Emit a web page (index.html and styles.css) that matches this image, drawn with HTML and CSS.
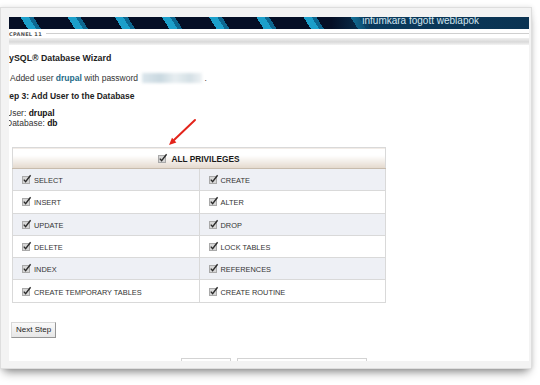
FILE: index.html
```html
<!DOCTYPE html>
<html lang="en">
<head>
  <meta charset="UTF-8">
  <title>MySQL Database Wizard</title>
  <link rel="stylesheet" href="styles.css">
</head>
<body>

  <svg class="defs" width="0" height="0">
    <symbol id="cb" viewBox="0 0 10 10">
      <rect x="0.5" y="2.5" width="7" height="7" fill="#d6d6d6" stroke="#a9a9a9"/>
      <path d="M1.8 5.6 L3.6 7.6 L8.6 1.2" fill="none" stroke="#2b2b2b" stroke-width="1.4"/>
    </symbol>
  </svg>

  <div class="frame">
    <div class="screen">
      <div class="banner"><span>infumkara fogott weblapok</span></div>
      <div class="cpbar"><span class="cplabel">CPANEL 11</span><span class="cpline"></span></div>
      <div class="cpband"></div>

      <div class="content">
        <h1 class="title">MySQL&reg; Database Wizard</h1>
        <p class="added">Added user <b class="user">drupal</b> with password <span class="blur"></span>.</p>
        <h2 class="step">Step 3: Add User to the Database</h2>
        <p class="info">User: <b>drupal</b><br>Database: <b>db</b></p>

        <table class="privs">
          <tr>
            <th colspan="2"><svg class="cb"><use href="#cb"/></svg>ALL PRIVILEGES</th>
          </tr>
          <tr class="alt">
            <td><svg class="cb"><use href="#cb"/></svg>SELECT</td>
            <td><svg class="cb"><use href="#cb"/></svg>CREATE</td>
          </tr>
          <tr>
            <td><svg class="cb"><use href="#cb"/></svg>INSERT</td>
            <td><svg class="cb"><use href="#cb"/></svg>ALTER</td>
          </tr>
          <tr class="alt">
            <td><svg class="cb"><use href="#cb"/></svg>UPDATE</td>
            <td><svg class="cb"><use href="#cb"/></svg>DROP</td>
          </tr>
          <tr>
            <td><svg class="cb"><use href="#cb"/></svg>DELETE</td>
            <td><svg class="cb"><use href="#cb"/></svg>LOCK TABLES</td>
          </tr>
          <tr class="alt">
            <td><svg class="cb"><use href="#cb"/></svg>INDEX</td>
            <td><svg class="cb"><use href="#cb"/></svg>REFERENCES</td>
          </tr>
          <tr>
            <td><svg class="cb"><use href="#cb"/></svg>CREATE TEMPORARY TABLES</td>
            <td><svg class="cb"><use href="#cb"/></svg>CREATE ROUTINE</td>
          </tr>
        </table>

        <button class="next">Next Step</button>

        <div class="bottom">
          <span class="box small"></span>
          <span class="box wide"></span>
        </div>
      </div>

      <!-- annotation arrow -->
      <svg class="arrow" width="32" height="30" viewBox="0 0 32 30">
        <line x1="28" y1="2" x2="7" y2="22" stroke="#e3241b" stroke-width="2" stroke-linecap="round"/>
        <polygon points="2,27 9.4,24.6 5,19.8" fill="#e3241b"/>
      </svg>
    </div>
  </div>

</body>
</html>
```

FILE: styles.css
```css
body {
  margin: 0;
  height: 385px;
  overflow: hidden;
  background: #fff;
  font-family: 'Liberation Sans', Arial, sans-serif;
  color: #222;
}

.defs {
  position: absolute;
}

.frame {
  margin-top: 7px;
  width: 520px;
  padding: 9px 2px 7px 8px;
  background: #f3f3f3;
  border: 1px solid #dedede;
  box-shadow: 0 7px 9px -4px rgba(0, 0, 0, 0.45), 0 0 5px rgba(0, 0, 0, 0.12);
}

.screen {
  position: relative;
  height: 344px;
  background: #fff;
  overflow: hidden;
}

.banner {
  height: 12px;
  display: flex;
  justify-content: flex-end;
  padding-right: 50px;
  overflow: hidden;
  background:
    linear-gradient(90deg, rgba(6, 40, 70, 0) 0, rgba(6, 40, 70, 0) 62%, #0a3a5c 70%, #0b3352 100%),
    repeating-linear-gradient(58deg, #050f26 0 16px, #1c9fca 16px 23px, #0d6790 23px 27px, #050f26 27px 40px);
}

.banner span {
  font-size: 10px;
  line-height: 8px;
  color: #d3e6f0;
}

.cpbar {
  height: 9px;
  display: flex;
  align-items: center;
  gap: 4px;
}

.cplabel {
  font-family: 'DejaVu Sans', sans-serif;
  font-size: 5px;
  font-weight: bold;
  letter-spacing: 0.3px;
  color: #555;
  margin-left: 0;
}

.cpline {
  flex: 1;
  height: 1px;
  background: #cfcfcf;
}

.cpband {
  height: 7px;
  background: linear-gradient(#f0f0f0, #d9d9d9 55%, #f4f4f4);
}

.title {
  margin: 7px 0 0 -7.3px;
  font-size: 8.8px;
  line-height: 12px;
  font-weight: bold;
}

.added {
  margin: 8px 0 0 1px;
  font-size: 8.5px;
  line-height: 12px;
  color: #333;
}

.user {
  color: #1e6b88;
}

.blur {
  display: inline-block;
  width: 60px;
  height: 10px;
  margin: 0 2px;
  vertical-align: -2px;
  background: linear-gradient(90deg, #dbe6ec, #c9d8e0 30%, #e7eef1 55%, #d4dfe5 80%, #eef2f4);
  filter: blur(1.5px);
}

.step {
  margin: 6px 0 0 -8.3px;
  font-size: 8.5px;
  line-height: 12px;
  font-weight: bold;
}

.info {
  margin: 6px 0 0 -3px;
  font-size: 8.5px;
  line-height: 10px;
  color: #333;
}

.info b {
  color: #111;
}

.privs {
  margin: 19px 0 0 3px;
  width: 374px;
  border-collapse: collapse;
  table-layout: fixed;
}

.privs th,
.privs td {
  border: 1px solid #d9d9d9;
  padding: 0 0 0 9px;
  text-align: left;
  white-space: nowrap;
}

.privs th {
  height: 20px;
  padding: 0;
  text-align: center;
  font-size: 8.3px;
  font-weight: bold;
  color: #1a1a1a;
  background: linear-gradient(#fff 35%, #e3d8cc);
  border-bottom-color: #c7bbad;
}

.privs td {
  height: 21.3px;
  font-size: 7.4px;
  color: #333;
  background: #fff;
}

.privs tr.alt td {
  background: #eef0f5;
}

.privs td:first-child {
  width: 178px;
}

.cb {
  width: 10px;
  height: 10px;
  margin-right: 2px;
  vertical-align: -1px;
}

.privs th .cb {
  margin-right: 3px;
}

.next {
  display: block;
  margin: 19px 0 0 2px;
  height: 16px;
  padding: 0 4px;
  font-family: 'Liberation Sans', Arial, sans-serif;
  font-size: 8px;
  color: #222;
  background: linear-gradient(#fafafa, #e6e6e6);
  border: 1px solid;
  border-color: #d8d8d8 #959595 #959595 #d8d8d8;
  border-radius: 0;
}

.bottom {
  display: flex;
  gap: 6px;
  margin: 20px 0 0 172px;
}

.box {
  height: 12px;
  border: 1px solid #d3d3d3;
  background: #fff;
}

.box.small {
  width: 48px;
}

.box.wide {
  width: 128px;
}

.arrow {
  position: absolute;
  left: 158px;
  top: 101px;
}
```
